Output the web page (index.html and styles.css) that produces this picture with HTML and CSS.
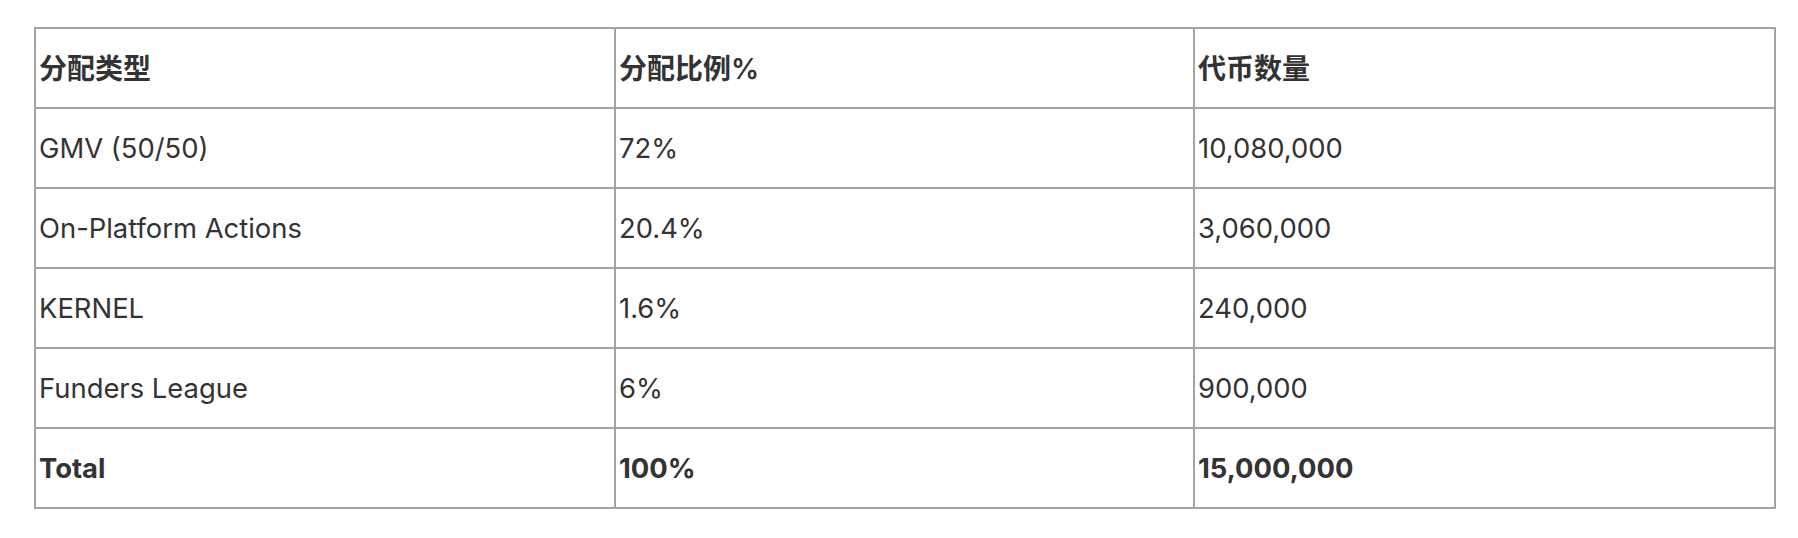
FILE: index.html
```html
<!DOCTYPE html>
<html lang="zh">
<head>
<meta charset="utf-8">
<title>代币分配</title>
<link rel="stylesheet" href="styles.css">
</head>
<body>
<table class="alloc">
  <colgroup>
    <col class="c1"><col class="c2"><col class="c3">
  </colgroup>
  <thead>
    <tr><th>分配类型</th><th>分配比例%</th><th>代币数量</th></tr>
  </thead>
  <tbody>
    <tr><td>GMV (50/50)</td><td>72%</td><td>10,080,000</td></tr>
    <tr><td>On-Platform Actions</td><td>20.4%</td><td>3,060,000</td></tr>
    <tr><td>KERNEL</td><td>1.6%</td><td>240,000</td></tr>
    <tr><td>Funders League</td><td>6%</td><td>900,000</td></tr>
    <tr class="total"><td>Total</td><td>100%</td><td>15,000,000</td></tr>
  </tbody>
</table>
</body>
</html>
```

FILE: styles.css
```css
html, body {
  margin: 0;
  padding: 0;
  background: #ffffff;
}

body {
  padding: 27px 0 0 34px;
  font-family: Inter, "Noto Sans CJK SC", sans-serif;
  color: #333333;
}

.alloc {
  border-collapse: separate;
  border-spacing: 0;
  table-layout: fixed;
  width: 1742px;
  border-left: 2px solid #a4a4a4;
  border-top: 2px solid #a4a4a4;
}

.alloc .c1 { width: 580px; }
.alloc .c2 { width: 579px; }
.alloc .c3 { width: 581px; }

.alloc th,
.alloc td {
  height: 80px;
  padding: 2px 0 0 3px;
  border-right: 2px solid #a4a4a4;
  border-bottom: 2px solid #a4a4a4;
  text-align: left;
  vertical-align: middle;
  font-size: 27.4px;
  line-height: 1;
  box-sizing: border-box;
}

.alloc th {
  font-weight: 600;
  font-size: 28px;
}

.alloc .total td {
  font-weight: 700;
}
```
